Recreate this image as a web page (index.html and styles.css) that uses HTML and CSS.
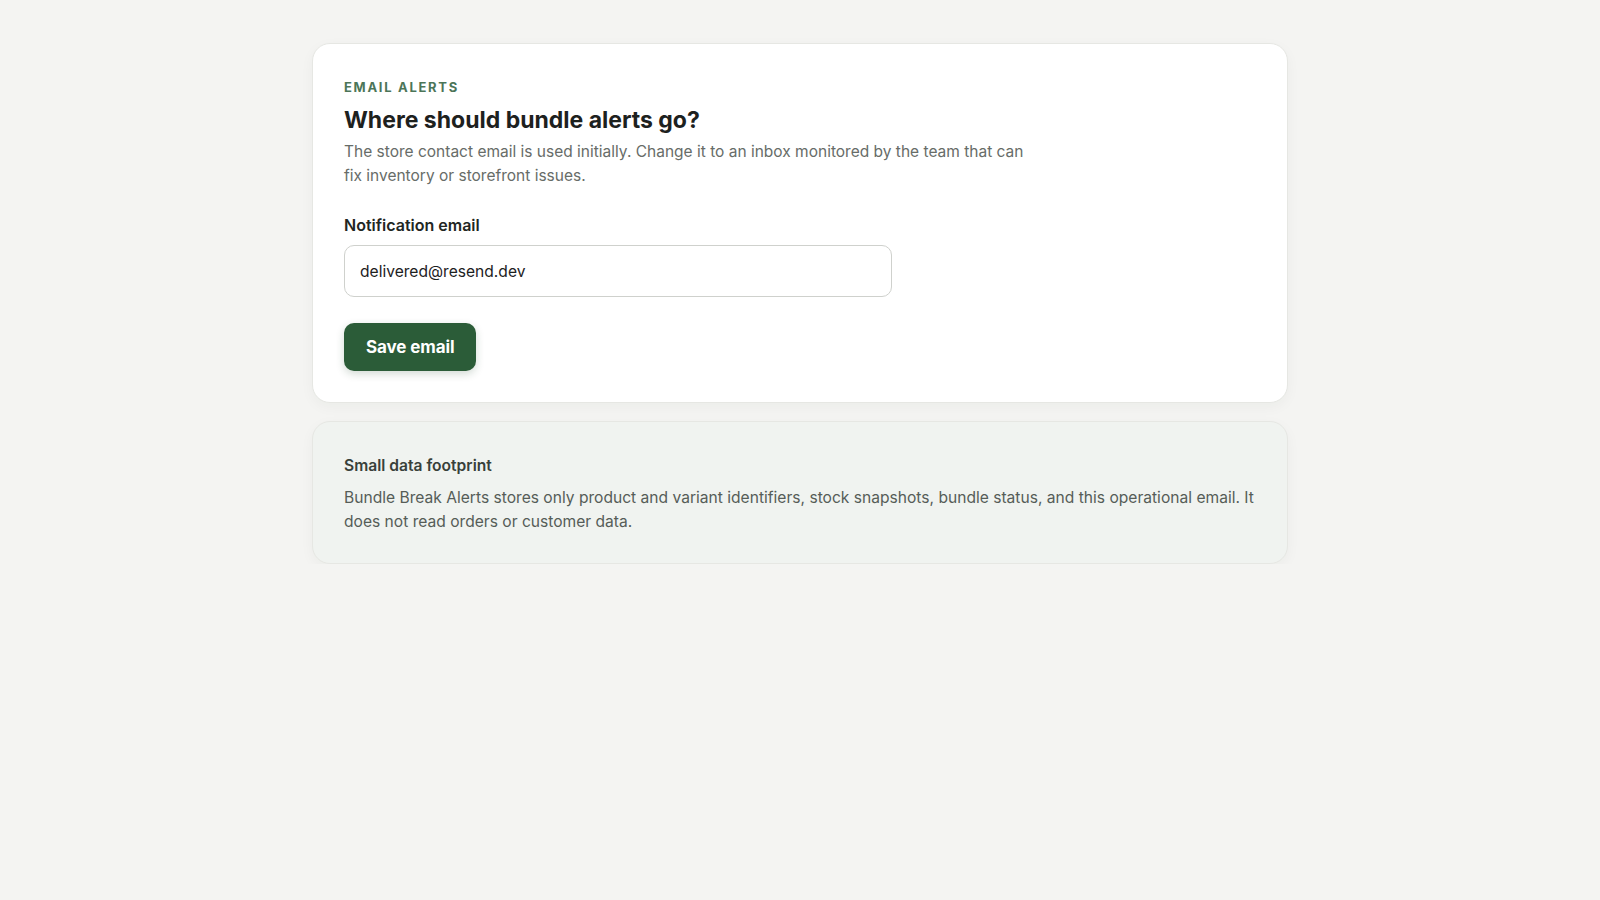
FILE: index.html
```html
<!doctype html>
<html lang="en">
  <head>
    <meta charset="UTF-8" />
    <meta name="viewport" content="width=device-width, initial-scale=1.0" />
    <title>Email alerts</title>
    <link rel="stylesheet" href="styles.css">
  </head>
  <body>
    <main class="page">
      <section class="card">
        <div class="eyebrow">Email alerts</div>
        <h1 class="title">Where should bundle alerts go?</h1>
        <p class="lead">
          The store contact email is used initially. Change it to an inbox monitored by the team that can
          fix inventory or storefront issues.
        </p>

        <form class="form" onsubmit="return false">
          <label class="label" for="email">Notification email</label>
          <input class="input" id="email" type="email" value="delivered@resend.dev" />
          <button class="button" type="submit">Save email</button>
        </form>
      </section>

      <!-- Privacy note -->
      <section class="card card-muted">
        <h2 class="note-title">Small data footprint</h2>
        <p class="note-text">
          Bundle Break Alerts stores only product and variant identifiers, stock snapshots, bundle status, and this
          operational email. It does not read orders or customer data.
        </p>
      </section>
    </main>
  </body>
</html>
```

FILE: styles.css
```css
body {
  margin: 0;
  padding: 0;
  background-color: #f4f4f2;
  color: #1f2421;
  font-family: Inter, "Noto Sans", sans-serif;
}

.page {
  width: 976px;
  margin: 0 auto;
  padding-top: 43px;
  display: flex;
  flex-direction: column;
  gap: 18px;
}

.card {
  background: #fff;
  border: 1px solid #e6e7e3;
  border-radius: 18px;
  padding: 34px 31px 31px;
  box-shadow: 0 4px 14px rgba(30, 40, 30, 0.04);
}

.eyebrow {
  font-size: 13px;
  font-weight: 700;
  letter-spacing: 1.7px;
  text-transform: uppercase;
  color: #4c7558;
  line-height: 18px;
}

.title {
  margin: 8px 0 0;
  font-size: 23px;
  font-weight: 700;
  letter-spacing: 0;
  line-height: 32px;
  color: #1d211e;
}

.lead {
  margin: 4px 0 0;
  max-width: 690px;
  font-size: 15.5px;
  line-height: 23.5px;
  color: #676c68;
}

.form {
  margin-top: 28px;
  display: flex;
  flex-direction: column;
  align-items: flex-start;
}

.label {
  font-size: 16px;
  font-weight: 600;
  color: #222623;
  line-height: 20px;
}

.input {
  box-sizing: border-box;
  margin-top: 10px;
  width: 548px;
  height: 52px;
  padding: 0 15px;
  border: 1px solid #cfd1cd;
  border-radius: 10px;
  font-family: inherit;
  font-size: 15.6px;
  color: #1d211e;
  background: #fff;
}

.button {
  margin-top: 26px;
  height: 48px;
  padding: 0 22px;
  border: none;
  border-radius: 10px;
  background-color: #2b5c38;
  color: #fff;
  font-family: inherit;
  font-size: 17px;
  font-weight: 700;
  letter-spacing: -0.1px;
  cursor: pointer;
  box-shadow: 0 3px 8px rgba(30, 70, 40, 0.2);
}

.card-muted {
  background: #f0f3f0;
  padding-top: 34px;
  padding-bottom: 30px;
}

.note-title {
  margin: 0;
  font-size: 15.6px;
  font-weight: 600;
  line-height: 20px;
  color: #38403a;
}

.note-text {
  margin: 10px 0 0;
  font-size: 15.6px;
  line-height: 23.5px;
  color: #565d58;
}
```
